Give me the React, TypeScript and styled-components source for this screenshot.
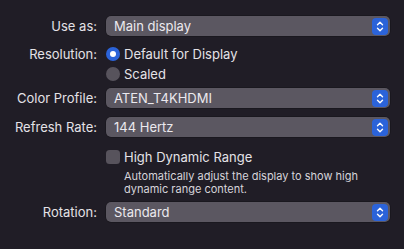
import React from "react";
import styled, { createGlobalStyle } from "styled-components";

const Global = createGlobalStyle`
  html, body { margin: 0; padding: 0; background: #201d26; }
  body { font-family: Inter, "Noto Sans", "Liberation Sans", sans-serif; -webkit-font-smoothing: antialiased; }
`;

const Panel = styled.div`
  width: 404px;
  height: 249px;
  box-sizing: border-box;
  padding: 16px 14px 0 0;
  display: grid;
  grid-template-columns: 97px 1fr;
  column-gap: 9px;
  align-content: start;
  align-items: start;
  color: #e4e2e7;
  font-size: 13px;
`;

const Label = styled.div<{ $mt?: number }>`
  text-align: right;
  margin-top: ${(p) => p.$mt ?? 0}px;
  line-height: 20px;
  height: 20px;
`;

const Field = styled.div<{ $mt?: number }>`
  margin-top: ${(p) => p.$mt ?? 0}px;
  display: flex;
  flex-direction: column;
`;

const Popup = styled.div`
  height: 20px;
  box-sizing: border-box;
  border-radius: 5px;
  background: #5b5761;
  display: flex;
  align-items: center;
  justify-content: space-between;
  padding: 0 2px 0 8px;
  box-shadow: 0 0 0 0.5px rgba(0,0,0,0.35);
`;

const PopupText = styled.span`
  color: #ebe9ee;
`;

const Stepper = styled.div`
  width: 16px;
  height: 17px;
  border-radius: 4px;
  background: #2b63d9;
  display: flex;
  align-items: center;
  justify-content: center;
`;

const OptionRow = styled.div`
  display: flex;
  align-items: center;
  height: 20px;
  gap: 4px;
`;

const Radio = styled.span<{ $on?: boolean }>`
  width: 14px;
  height: 14px;
  border-radius: 50%;
  box-sizing: border-box;
  background: ${(p) => (p.$on ? "#2b63d9" : "#57535c")};
  display: flex;
  align-items: center;
  justify-content: center;
  &::after {
    content: "";
    width: 6px;
    height: 6px;
    border-radius: 50%;
    background: #fff;
    display: ${(p) => (p.$on ? "block" : "none")};
  }
`;

const Check = styled.span`
  width: 14px;
  height: 14px;
  border-radius: 3.5px;
  background: #57535c;
`;

const Note = styled.div`
  margin-left: 18px;
  font-size: 11px;
  line-height: 13px;
  color: #d6d4da;
  margin-top: 3px;
`;

const Chevrons = () => (
  <svg width="10" height="13" viewBox="0 0 10 13" fill="none" stroke="#fff" strokeWidth="1.4" strokeLinecap="round" strokeLinejoin="round">
    <path d="M2.5 4.8 L5 2.3 L7.5 4.8" />
    <path d="M2.5 8.2 L5 10.7 L7.5 8.2" />
  </svg>
);

const Select = ({ value }: { value: string }) => (
  <Popup>
    <PopupText>{value}</PopupText>
    <Stepper>
      <Chevrons />
    </Stepper>
  </Popup>
);

export default function App() {
  return (
    <>
      <Global />
      <Panel>
        <Label>Use as:</Label>
        <Field>
          <Select value="Main display" />
        </Field>

        <Label $mt={8}>Resolution:</Label>
        <Field $mt={8}>
          <OptionRow>
            <Radio $on />
            <span>Default for Display</span>
          </OptionRow>
          <OptionRow>
            <Radio />
            <span>Scaled</span>
          </OptionRow>
        </Field>

        <Label $mt={4}>Color Profile:</Label>
        <Field $mt={4}>
          <Select value="ATEN_T4KHDMI" />
        </Field>

        <Label $mt={9}>Refresh Rate:</Label>
        <Field $mt={9}>
          <Select value="144 Hertz" />
        </Field>

        <div />
        <Field $mt={10}>
          <OptionRow>
            <Check />
            <span>High Dynamic Range</span>
          </OptionRow>
          <Note>
            Automatically adjust the display to show high
            <br />
            dynamic range content.
          </Note>
        </Field>

        <Label $mt={6}>Rotation:</Label>
        <Field $mt={6}>
          <Select value="Standard" />
        </Field>
      </Panel>
    </>
  );
}
